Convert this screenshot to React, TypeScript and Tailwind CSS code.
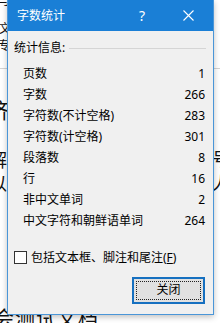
import { useState } from "react";

const STATS = [
    { label: "页数", value: "1" },
    { label: "字数", value: "266" },
    { label: "字符数(不计空格)", value: "283" },
    { label: "字符数(计空格)", value: "301" },
    { label: "段落数", value: "8" },
    { label: "行", value: "16" },
    { label: "非中文单词", value: "2" },
    { label: "中文字符和朝鲜语单词", value: "264" },
];

const FONT = { fontFamily: '"Noto Sans", "Noto Sans CJK SC", sans-serif' };

export default function App() {
    const [includeNotes, setIncludeNotes] = useState(false);

    return (
        <div
            className="relative w-[220px] h-[323px] overflow-hidden bg-white text-black"
            style={FONT}
        >
            {/* ── Document behind the dialog ─────────── */}
            <div className="absolute inset-0 leading-none text-[#111]">
                <span className="absolute left-[-2px] top-[-7px] text-[13px]">写</span>
                <span className="absolute left-[-1px] top-[23px] text-[12px]">文</span>
                <span className="absolute left-[-2px] top-[40px] text-[12px]">专</span>
                <div className="absolute left-0 right-0 top-[68px] h-px bg-[#d4d4d4]" />
                <span className="absolute left-[-12px] top-[100px] text-[21px]">济</span>
                <span className="absolute left-[-11px] top-[151px] text-[18px]">解</span>
                <span className="absolute left-[-11px] top-[175px] text-[18px]">以</span>
                <span className="absolute left-[212px] top-[150px] text-[18px]">号</span>
                <span className="absolute left-[212px] top-[174px] text-[18px]">人</span>
                <span className="absolute left-[-6px] top-[309px] text-[20px] tracking-[1px]">
                    会测试文档
                </span>
            </div>

            {/* ── Dialog ─────────────────────────────── */}
            <div className="absolute left-[7px] top-0 w-[207px] h-[315px] flex flex-col border border-t-0 border-[#4a96d8] bg-[#f0f0f0] shadow-[0_2px_6px_rgba(0,0,0,0.25)]">
                {/* Title bar */}
                <div className="flex items-center h-[31px] shrink-0 bg-[#1a7fd6] text-white">
                    <span className="pl-[9px] flex-1 text-[12px] leading-none">字数统计</span>
                    <span className="w-[14px] text-center text-[14px] leading-none mr-[34px]">?</span>
                    <svg width="11" height="11" viewBox="0 0 11 11" className="mr-[19px]">
                        <path d="M0.5 0.5 L10.5 10.5 M10.5 0.5 L0.5 10.5" stroke="#fff" strokeWidth="1.1" />
                    </svg>
                </div>

                {/* Body */}
                <div className="flex flex-col flex-1 px-[6px]">
                    <div className="flex items-center mt-[9px] h-[16px]">
                        <span className="text-[12px] leading-none">统计信息:</span>
                        <div className="flex-1 h-px ml-[4px] mr-[1px] bg-[#d5d5d5]" />
                    </div>

                    <div className="flex flex-col mt-[7px] pl-[9px] pr-[2px]">
                        {STATS.map(({ label, value }) => (
                            <div key={label} className="flex items-center justify-between h-[21.1px] text-[12px] leading-none">
                                <span>{label}</span>
                                <span>{value}</span>
                            </div>
                        ))}
                    </div>

                    <label className="flex items-center mt-[19px] h-[14px] text-[12px] leading-none cursor-pointer">
                        <span
                            className="w-[13px] h-[13px] border border-[#333] bg-white shrink-0 flex items-center justify-center"
                            onClick={() => setIncludeNotes(!includeNotes)}
                        >
                            {includeNotes && (
                                <svg width="9" height="9" viewBox="0 0 9 9">
                                    <path d="M1 4.5 L3.5 7 L8 1.5" stroke="#000" strokeWidth="1.3" fill="none" />
                                </svg>
                            )}
                        </span>
                        <span className="ml-[4px]">
                            包括文本框、脚注和尾注(<span className="underline">F</span>)
                        </span>
                    </label>

                    <div className="flex justify-end mt-[12px] pr-[2px]">
                        <button className="w-[73px] h-[27px] p-[2px] border-2 border-[#1670c0] bg-[#e1e1e1] text-[12px] leading-none">
                            <span className="flex items-center justify-center w-full h-full border border-dotted border-[#222]">
                                关闭
                            </span>
                        </button>
                    </div>
                </div>
            </div>
        </div>
    );
}
